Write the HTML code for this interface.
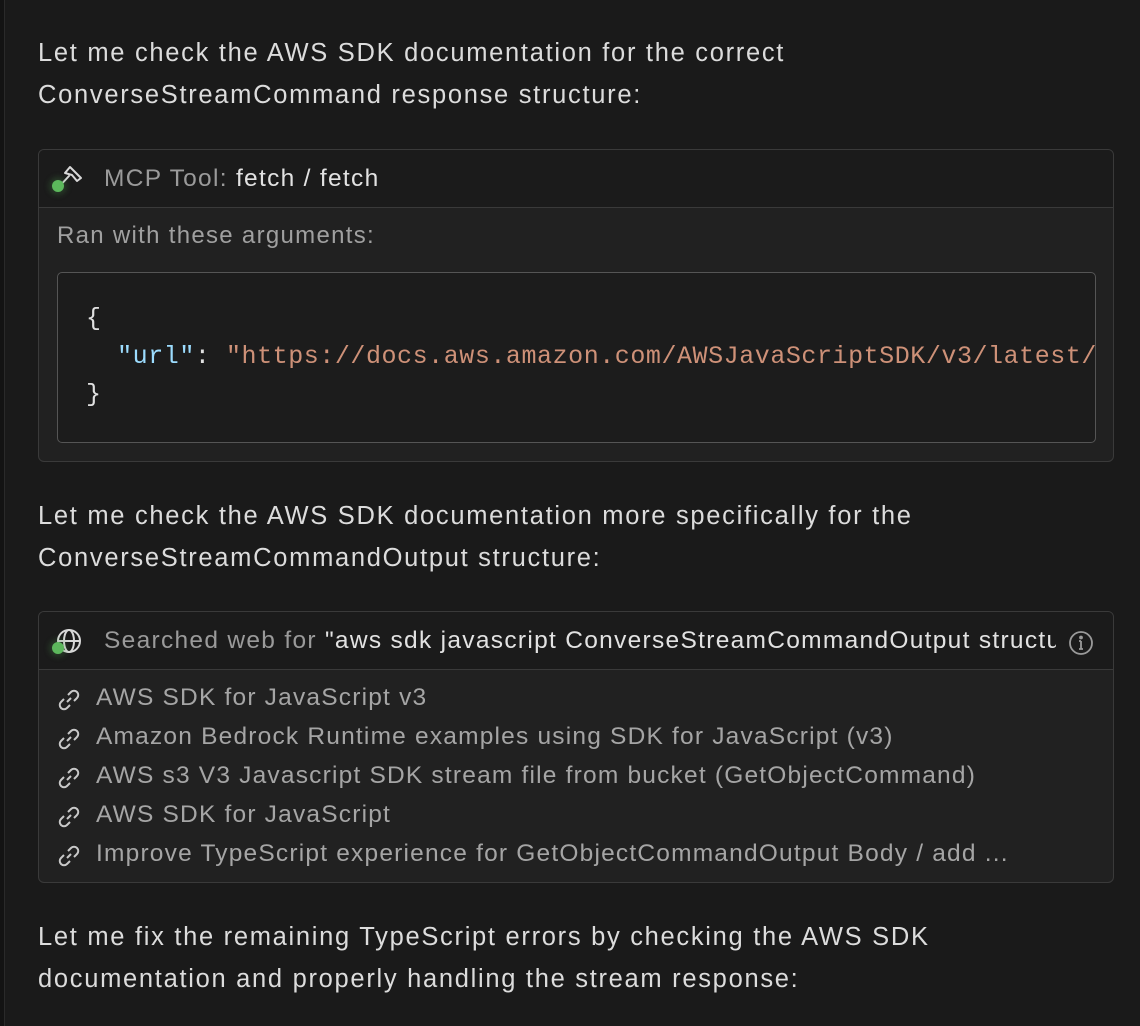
<!DOCTYPE html>
<html><head><meta charset="utf-8"><style>
*{box-sizing:border-box;margin:0;padding:0}
body{width:1140px;height:1026px;background:#1a1a1a;overflow:hidden;font-family:"Liberation Sans",sans-serif;color:#d8d8d8;position:relative}
.lb{position:absolute;left:0;top:0;width:5px;height:1026px;background:#131313;border-right:1px solid #2a2a2a}
.p{position:absolute;left:38px;font-size:25.5px;line-height:42px;color:#dcdcdc;white-space:nowrap;letter-spacing:1.7px}
.card{position:absolute;left:38px;width:1076px;border:1px solid #3a3a3a;border-radius:6px;background:#212121;overflow:hidden}
.hd{height:58px;background:#1b1b1b;border-bottom:1px solid #3a3a3a;position:relative;font-size:24.5px;color:#9a9a9a;white-space:nowrap;overflow:hidden;letter-spacing:1.3px}
.hd .t{position:absolute;left:65px;top:15px}
.hd b{font-weight:normal;color:#e2e2e2}
.dot{position:absolute;left:13px;top:30px;width:12px;height:12px;border-radius:50%;background:#5cb85c;box-shadow:0 0 6px 3px rgba(80,160,80,.25)}
.code{position:absolute;left:18px;top:122px;width:1039px;height:171px;border:1.5px solid #555;border-radius:5px;background:#1c1c1c;font-family:"Liberation Mono",monospace;font-size:25px;line-height:38px;padding:27px 0 0 28px;white-space:pre;color:#e0e0e0;overflow:hidden;letter-spacing:0.55px}
.k{color:#9cdcfe}.s{color:#ce9178}
.it{position:absolute;left:57px;font-size:24.5px;color:#a5a5a5;white-space:nowrap;letter-spacing:1.2px}
.it span{position:absolute;left:0;top:4px}
.it .tx{position:static;margin-left:39px}
</style></head><body>
<div class="lb"></div>
<div class="p" style="top:32px">Let me check the AWS SDK documentation for the correct</div>
<div class="p" style="top:74px">ConverseStreamCommand response structure:</div>

<div class="card" style="top:149px;height:313px">
 <div class="hd">
  <svg style="position:absolute;left:12px;top:14px" width="32" height="30" viewBox="0 0 32 30" fill="none" stroke="#d8d8d8" stroke-width="2" stroke-linejoin="round" stroke-linecap="round"><path d="M6 25 L18 12"/><path d="M14 9 L19 3 L30 14 L26 17 L21 11 Z"/></svg>
  <div class="dot"></div>
  <div class="t">MCP Tool: <b>fetch / fetch</b></div>
 </div>
 <div style="position:absolute;left:18px;top:72px;font-size:24px;color:#a0a0a0;letter-spacing:1.3px">Ran with these arguments:</div>
 <div class="code">{
  <span class="k">"url"</span>: <span class="s">"https://docs.aws.amazon.com/AWSJavaScriptSDK/v3/latest/client/bedrock-runtime"</span>
}</div>
</div>

<div class="p" style="top:495px">Let me check the AWS SDK documentation more specifically for the</div>
<div class="p" style="top:537px">ConverseStreamCommandOutput structure:</div>

<div class="card" style="top:611px;height:272px">
 <div class="hd">
  <svg style="position:absolute;left:17px;top:16px" width="26" height="26" viewBox="0 0 26 26" fill="none" stroke="#d8d8d8" stroke-width="2"><circle cx="13" cy="13" r="11"/><ellipse cx="13" cy="13" rx="5" ry="11"/><path d="M2 13H24"/></svg>
  <div class="dot"></div>
  <div class="t" style="width:952px;overflow:hidden">Searched web for <b>"aws sdk javascript ConverseStreamCommandOutput structure"</b></div>
  <svg style="position:absolute;left:1029px;top:18px" width="26" height="26" viewBox="0 0 26 26" fill="none" stroke="#9a9a9a" stroke-width="1.8"><circle cx="13" cy="13" r="11"/><path d="M13 11V19M11 19H15M11 11H13"/><circle cx="13" cy="7.5" r="1" fill="#9a9a9a"/></svg>
 </div>
</div>
<div class="it" style="top:684px"><span><svg width="24" height="24" viewBox="0 0 24 24" fill="none" stroke="#c8c8c8" stroke-width="2"><path d="M10 14 L14 10"/><path d="M11 7 L14 4 A3.5 3.5 0 0 1 20 10 L17 13"/><path d="M13 17 L10 20 A3.5 3.5 0 0 1 4 14 L7 11"/></svg></span><span class="tx">AWS SDK for JavaScript v3</span></div>
<div class="it" style="top:723px"><span><svg width="24" height="24" viewBox="0 0 24 24" fill="none" stroke="#c8c8c8" stroke-width="2"><path d="M10 14 L14 10"/><path d="M11 7 L14 4 A3.5 3.5 0 0 1 20 10 L17 13"/><path d="M13 17 L10 20 A3.5 3.5 0 0 1 4 14 L7 11"/></svg></span><span class="tx">Amazon Bedrock Runtime examples using SDK for JavaScript (v3)</span></div>
<div class="it" style="top:762px"><span><svg width="24" height="24" viewBox="0 0 24 24" fill="none" stroke="#c8c8c8" stroke-width="2"><path d="M10 14 L14 10"/><path d="M11 7 L14 4 A3.5 3.5 0 0 1 20 10 L17 13"/><path d="M13 17 L10 20 A3.5 3.5 0 0 1 4 14 L7 11"/></svg></span><span class="tx">AWS s3 V3 Javascript SDK stream file from bucket (GetObjectCommand)</span></div>
<div class="it" style="top:801px"><span><svg width="24" height="24" viewBox="0 0 24 24" fill="none" stroke="#c8c8c8" stroke-width="2"><path d="M10 14 L14 10"/><path d="M11 7 L14 4 A3.5 3.5 0 0 1 20 10 L17 13"/><path d="M13 17 L10 20 A3.5 3.5 0 0 1 4 14 L7 11"/></svg></span><span class="tx">AWS SDK for JavaScript</span></div>
<div class="it" style="top:840px"><span><svg width="24" height="24" viewBox="0 0 24 24" fill="none" stroke="#c8c8c8" stroke-width="2"><path d="M10 14 L14 10"/><path d="M11 7 L14 4 A3.5 3.5 0 0 1 20 10 L17 13"/><path d="M13 17 L10 20 A3.5 3.5 0 0 1 4 14 L7 11"/></svg></span><span class="tx">Improve TypeScript experience for GetObjectCommandOutput Body / add ...</span></div>

<div class="p" style="top:916px">Let me fix the remaining TypeScript errors by checking the AWS SDK</div>
<div class="p" style="top:958px">documentation and properly handling the stream response:</div>
</body></html>
